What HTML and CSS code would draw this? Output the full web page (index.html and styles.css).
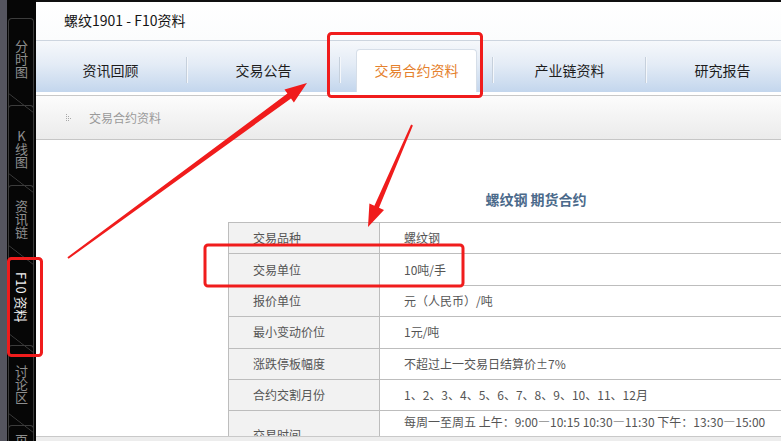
FILE: index.html
```html
<!DOCTYPE html>
<html lang="zh-CN">
<head>
<meta charset="utf-8">
<title>螺纹1901 - F10资料</title>
<link rel="stylesheet" href="styles.css">
</head>
<body>
<div class="app">
  <aside class="side">
    <div class="stab t1"><span class="vt">分时图</span></div>
    <div class="stab t2"><span class="vt up">K线图</span></div>
    <div class="stab t3"><span class="vt">资讯链</span></div>
    <div class="stab t4 active"><span class="vt side-rot">F10 资料</span></div>
    <div class="stab t5"><span class="vt">讨论区</span></div>
    <div class="stab t6"><span class="vt">页面</span></div>
  </aside>
  <main class="main">
    <header class="titlebar">螺纹1901 - F10资料</header>
    <nav class="tabs">
      <div class="tab"><span>资讯回顾</span></div>
      <div class="tab"><span>交易公告</span></div>
      <div class="tab on"><span>交易合约资料</span></div>
      <div class="tab"><span>产业链资料</span></div>
      <div class="tab last"><span>研究报告</span></div>
    </nav>
    <div class="crumb">
      <svg class="crumb-ico" width="6" height="8" viewBox="0 0 6 8"><g fill="#a8a8a8"><rect x="0" y="0" width="1" height="1"/><rect x="0" y="2" width="1" height="1"/><rect x="2" y="2" width="1" height="1"/><rect x="0" y="4" width="1" height="1"/><rect x="2" y="4" width="1" height="1"/><rect x="4" y="4" width="1" height="1"/><rect x="0" y="6" width="1" height="1"/><rect x="2" y="6" width="1" height="1"/><rect x="0" y="8" width="1" height="1"/></g></svg>
      <span>交易合约资料</span>
    </div>
    <section class="content">
      <div class="sheet">
        <h1 class="sheet-title">螺纹钢 期货合约</h1>
        <table class="spec">
          <tr><td class="k">交易品种</td><td class="v">螺纹钢</td></tr>
          <tr><td class="k">交易单位</td><td class="v">10吨/手</td></tr>
          <tr><td class="k">报价单位</td><td class="v">元（人民币）/吨</td></tr>
          <tr><td class="k">最小变动价位</td><td class="v">1元/吨</td></tr>
          <tr><td class="k">涨跌停板幅度</td><td class="v">不超过上一交易日结算价±7%</td></tr>
          <tr><td class="k">合约交割月份</td><td class="v">1、2、3、4、5、6、7、8、9、10、11、12月</td></tr>
          <tr class="tall"><td class="k">交易时间</td><td class="v">每周一至周五 上午：9:00—10:15 10:30—11:30 下午：13:30—15:00<br>其他交易时间以交易所公布时间为准</td></tr>
          <tr><td class="k">最后交易日</td><td class="v">合约交割月份的15日</td></tr>
        </table>
      </div>
    </section>
    <div class="footstrip"></div>
  </main>
</div>
<svg class="marks" width="781" height="441" viewBox="0 0 781 441">
  <g fill="none" stroke="#f01c1c" stroke-width="3">
    <rect x="328.5" y="33.5" width="153" height="63" rx="3"/>
    <rect x="205" y="245" width="258" height="41" rx="3"/>
    <rect x="8.5" y="258.5" width="33" height="97" rx="3"/>
  </g>
  <g fill="#f01c1c">
    <polygon points="68.6,258.8 67.4,257.2 287.4,93.6 284.5,89.5 307,83 293.9,102.5 291,98.4"/>
    <polygon points="412.9,125.4 411.1,124.6 374.4,205.8 369.4,203.6 368,227 384,210 379,207.8"/>
  </g>
</svg>
</body>
</html>
```

FILE: styles.css
```css
* { box-sizing: border-box; margin: 0; padding: 0; }
html, body { width: 781px; height: 441px; overflow: hidden; }
body {
  font-family: "Noto Sans CJK SC", "Noto Sans", sans-serif;
  background: #fff;
  position: relative;
}
.app { display: flex; width: 781px; height: 441px; }

/* left sidebar */
.side {
  width: 36px;
  flex: none;
  background: #060606;
  border-left: 7px solid #55555f;
  padding-top: 18px;
  display: flex;
  flex-direction: column;
  overflow: hidden;
}
.stab {
  position: relative;
  width: 26px;
  margin-left: 1px;
  flex: none;
  border: 1px solid #3c3c3c;
  border-bottom: none;
  border-radius: 4px 4px 0 0;
  display: flex;
  justify-content: center;
  padding-top: 20px;
}
.stab::after {
  content: "";
  position: absolute;
  left: -1px;
  right: -1px;
  bottom: 0;
  height: 20px;
  background: linear-gradient(to top right, transparent calc(50% - 0.7px), #3c3c3c 50%, transparent calc(50% + 0.7px));
}
.stab + .stab { margin-top: -8px; }
.t1 { height: 95px; padding-top: 21px; }
.t2 { height: 88px; padding-top: 24px; }
.t3 { height: 80px; padding-top: 14px; }
.t4 { height: 96px; padding-top: 14px; }
.t5 { height: 88px; padding-top: 19px; }
.t6 { height: 40px; padding-top: 8px; }
.vt {
  writing-mode: vertical-rl;
  text-orientation: upright;
  font-size: 13px;
  line-height: 14px;
  color: #8e8e8e;
  letter-spacing: 0;
}
.side-rot {
  text-orientation: sideways;
  color: #f4f4f4;
  font-size: 13px;
}

/* main */
.main {
  flex: 1;
  min-width: 0;
  display: flex;
  flex-direction: column;
  border-top: 2px solid #101010;
  overflow: hidden;
}
.titlebar {
  height: 38px;
  flex: none;
  background: linear-gradient(#ffffff, #fbfcfd);
  padding-left: 28px;
  padding-top: 8px;
  font-size: 14px;
  color: #151515;
  line-height: 20px;
}
.tabs {
  height: 52px;
  flex: none;
  display: flex;
  border-top: 1px solid #cdd5df;
  background: linear-gradient(#f6f8fb 0%, #e4ecf6 45%, #c3d6ed 100%);
  margin-left: -2px;
}
.tab {
  width: 153px;
  flex: none;
  display: flex;
  justify-content: center;
  align-items: flex-end;
  position: relative;
  font-size: 14px;
  color: #1d1d1d;
}
.tab span { padding-bottom: 12px; line-height: 20px; }
.tab::after {
  content: "";
  position: absolute;
  right: 0;
  top: 16px;
  height: 26px;
  width: 1px;
  background: #c6d0dc;
  box-shadow: 1px 0 0 #f4f7fb;
}
.tab.last::after { display: none; }
.tab.on span {
  width: 121px;
  height: 43px;
  background: #fff;
  border: 1px solid #d6dee8;
  border-bottom: none;
  border-radius: 4px 4px 0 0;
  color: #e5812d;
  text-align: center;
  padding: 10px 0 0;
}
.crumb {
  height: 45px;
  flex: none;
  margin-top: 3px;
  border-top: 1px solid #c8c8c8;
  border-bottom: 1px solid #c6c6c6;
  background: linear-gradient(#fcfcfc, #ebebeb);
  display: flex;
  align-items: center;
  padding-left: 30px;
  font-size: 12px;
  color: #9a9a9a;
}
.crumb-ico { margin-right: 17px; margin-top: 1px; }
.content {
  flex: 1;
  min-height: 0;
  overflow: hidden;
  padding-left: 192px;
}
.sheet { width: 616px; }
.sheet-title {
  text-align: center;
  font-size: 14px;
  font-weight: bold;
  color: #4b6a8b;
  line-height: 20px;
  padding-top: 49px;
  height: 82px;
}
.spec {
  width: 616px;
  border-collapse: collapse;
  font-size: 12px;
  color: #555;
}
.spec td {
  border: 1px solid #bdbdbd;
  height: 31.4px;
  line-height: 18px;
  padding: 0 0 0 24px;
  vertical-align: middle;
}
.spec td.k { width: 151px; background: #f2f2f2; padding-left: 24px; }
.spec tr.tall td { height: 46px; padding-top: 2px; }
.spec tr.tall td.v { vertical-align: top; line-height: 22px; padding-top: 0; }
.footstrip {
  height: 5px;
  flex: none;
  background: #ededed;
  border-top: 1px solid #c9c9c9;
}

.marks {
  position: absolute;
  left: 0;
  top: 0;
  pointer-events: none;
}
```
